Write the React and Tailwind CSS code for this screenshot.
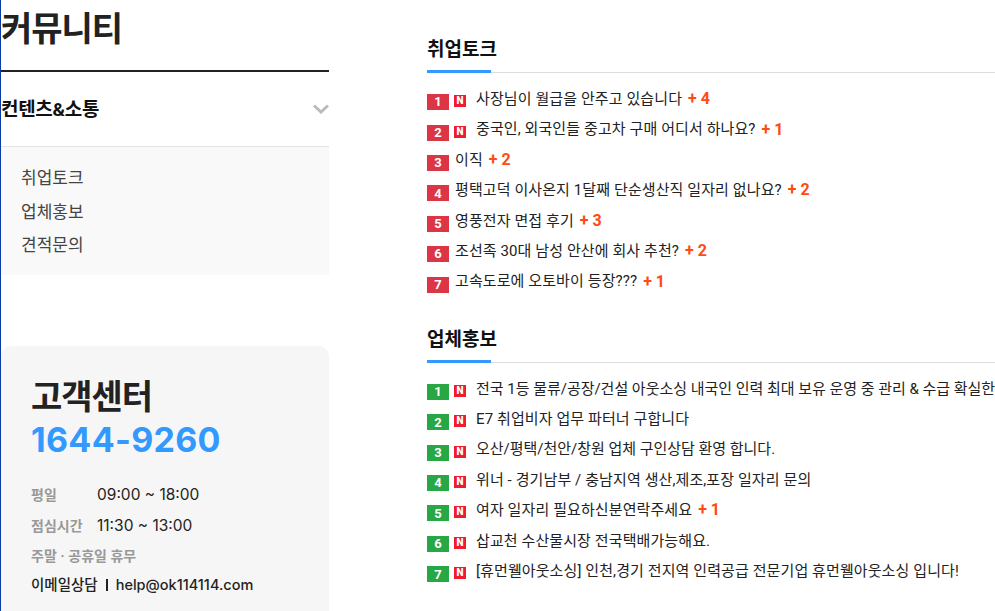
const KR = "font-['Roboto','Noto_Sans_CJK_KR',sans-serif]";

const talk = [
  { title: '사장님이 월급을 안주고 있습니다', count: 4, isNew: true },
  { title: '중국인, 외국인들 중고차 구매 어디서 하나요?', count: 1, isNew: true },
  { title: '이직', count: 2 },
  { title: '평택고덕 이사온지 1달째 단순생산직 일자리 없나요?', count: 2 },
  { title: '영풍전자 면접 후기', count: 3 },
  { title: '조선족 30대 남성 안산에 회사 추천?', count: 2 },
  { title: '고속도로에 오토바이 등장???', count: 1 },
];

const promo = [
  { title: '전국 1등 물류/공장/건설 아웃소싱 내국인 인력 최대 보유 운영 중 관리 & 수급 확실한', isNew: true, tight: true },
  { title: 'E7 취업비자 업무 파터너 구합니다', isNew: true },
  { title: '오산/평택/천안/창원 업체 구인상담 환영 합니다.', isNew: true, tight: true },
  { title: '위너 - 경기남부 / 충남지역 생산,제조,포장 일자리 문의', isNew: true },
  { title: '여자 일자리 필요하신분연락주세요', count: 1, isNew: true },
  { title: '삽교천 수산물시장 전국택배가능해요.', isNew: true },
  { title: '[휴먼웰아웃소싱] 인천,경기 전지역 인력공급 전문기업 휴먼웰아웃소싱 입니다!', isNew: true },
];

function NewBadge() {
  return (
    <span className="mt-[4px] ml-[5px] mr-[10px] flex h-[12px] w-[12px] shrink-0 items-center justify-center bg-[#f01c2c] text-[10px] leading-none font-black text-white">
      N
    </span>
  );
}

function Row({ rank, item, badgeColor }) {
  return (
    <li className="flex h-[30.4px] items-center whitespace-nowrap">
      <span className={`mt-[6px] flex h-[16px] w-[22px] shrink-0 items-center justify-center text-[13px] font-bold text-white ${badgeColor}`}>
        {rank}
      </span>
      {item.isNew ? <NewBadge /> : <span className="w-[6px] shrink-0" />}
      <span className={`text-[15px] text-[#222] ${item.tight ? 'tracking-[-0.02px]' : 'tracking-[0.1px]'}`}>{item.title}</span>
      {item.count && <span className="ml-[6px] text-[16px] font-bold text-[#ff4a12]">+ {item.count}</span>}
    </li>
  );
}

function Board({ title, items, badgeColor }) {
  return (
    <section>
      <h2 className="h-[41px] pt-[4px] text-[19px] leading-[34px] font-bold text-[#111]">{title}</h2>
      <div className="h-[3px] border-b border-[#ddd]">
        <div className="h-[3px] w-[64px] bg-[#3399ff]" />
      </div>
      <ul className="mt-[11px]">
        {items.map((item, i) => (
          <Row key={i} rank={i + 1} item={item} badgeColor={badgeColor} />
        ))}
      </ul>
    </section>
  );
}

export default function App() {
  return (
    <div className={`flex h-[611px] w-[995px] overflow-hidden bg-white ${KR}`}>
      {/* Sidebar */}
      <aside className="flex w-[329px] shrink-0 flex-col border-l border-[#0a3ca8]">
        <h1 className="h-[70px] pt-[6px] text-[34px] leading-[46px] font-bold tracking-[-1px] text-[#222]">커뮤니티</h1>
        <div className="h-[2px] bg-[#222]" />
        <div className="flex h-[75px] items-center justify-between border-b border-[#e5e5e5]">
          <span className="pt-[2px] text-[19px] font-bold tracking-[-0.3px] text-[#111]">컨텐츠&소통</span>
          <svg width="16" height="10" viewBox="0 0 16 10" fill="none" stroke="#bbb" strokeWidth="3">
            <path d="M1 1.5l7 6.5 7-6.5" />
          </svg>
        </div>
        <ul className="h-[128px] bg-[#f9f9f9] pt-[15px] pl-[20px] text-[17px] text-[#444]">
          <li className="h-[33.6px] leading-[33px]">취업토크</li>
          <li className="h-[33.6px] leading-[33px]">업체홍보</li>
          <li className="h-[33.6px] leading-[33px]">견적문의</li>
        </ul>

        <div className="mt-[71px] flex-1 rounded-t-[10px] bg-[#f6f6f6] pt-[30px] pl-[30px] font-['Inter','Noto_Sans_CJK_KR',sans-serif]">
          <div className="text-[34px] leading-[42px] font-bold tracking-[-1px] text-[#222]">고객센터</div>
          <div className="text-[34px] leading-[43px] font-bold tracking-[0.3px] text-[#3399ff]">1644-9260</div>
          <dl className="mt-[18px] text-[15.5px]">
            <div className="flex h-[31px] items-center">
              <dt className="w-[66px] text-[14px] font-semibold text-[#999]">평일</dt>
              <dd className="text-[#222]">09:00 ~ 18:00</dd>
            </div>
            <div className="flex h-[31px] items-center">
              <dt className="w-[66px] text-[14px] font-semibold text-[#999]">점심시간</dt>
              <dd className="text-[#222]">11:30 ~ 13:00</dd>
            </div>
          </dl>
          <div className="flex h-[28px] items-center text-[14px] font-semibold text-[#999]">주말 · 공휴일 휴무</div>
          <div className="flex h-[31px] items-center text-[14.5px] font-medium text-[#222]">
            <span>이메일상담</span>
            <span className="mx-[8px] h-[12px] w-[2px] bg-[#222]" />
            <span>help@ok114114.com</span>
          </div>
        </div>
      </aside>

      {/* Boards */}
      <main className="ml-[98px] flex-1 overflow-hidden pt-[29px]">
        <Board title="취업토크" items={talk} badgeColor="bg-[#dc3545]" />
        <div className="mt-[22px]">
          <Board title="업체홍보" items={promo} badgeColor="bg-[#28a745]" />
        </div>
      </main>
    </div>
  );
}
